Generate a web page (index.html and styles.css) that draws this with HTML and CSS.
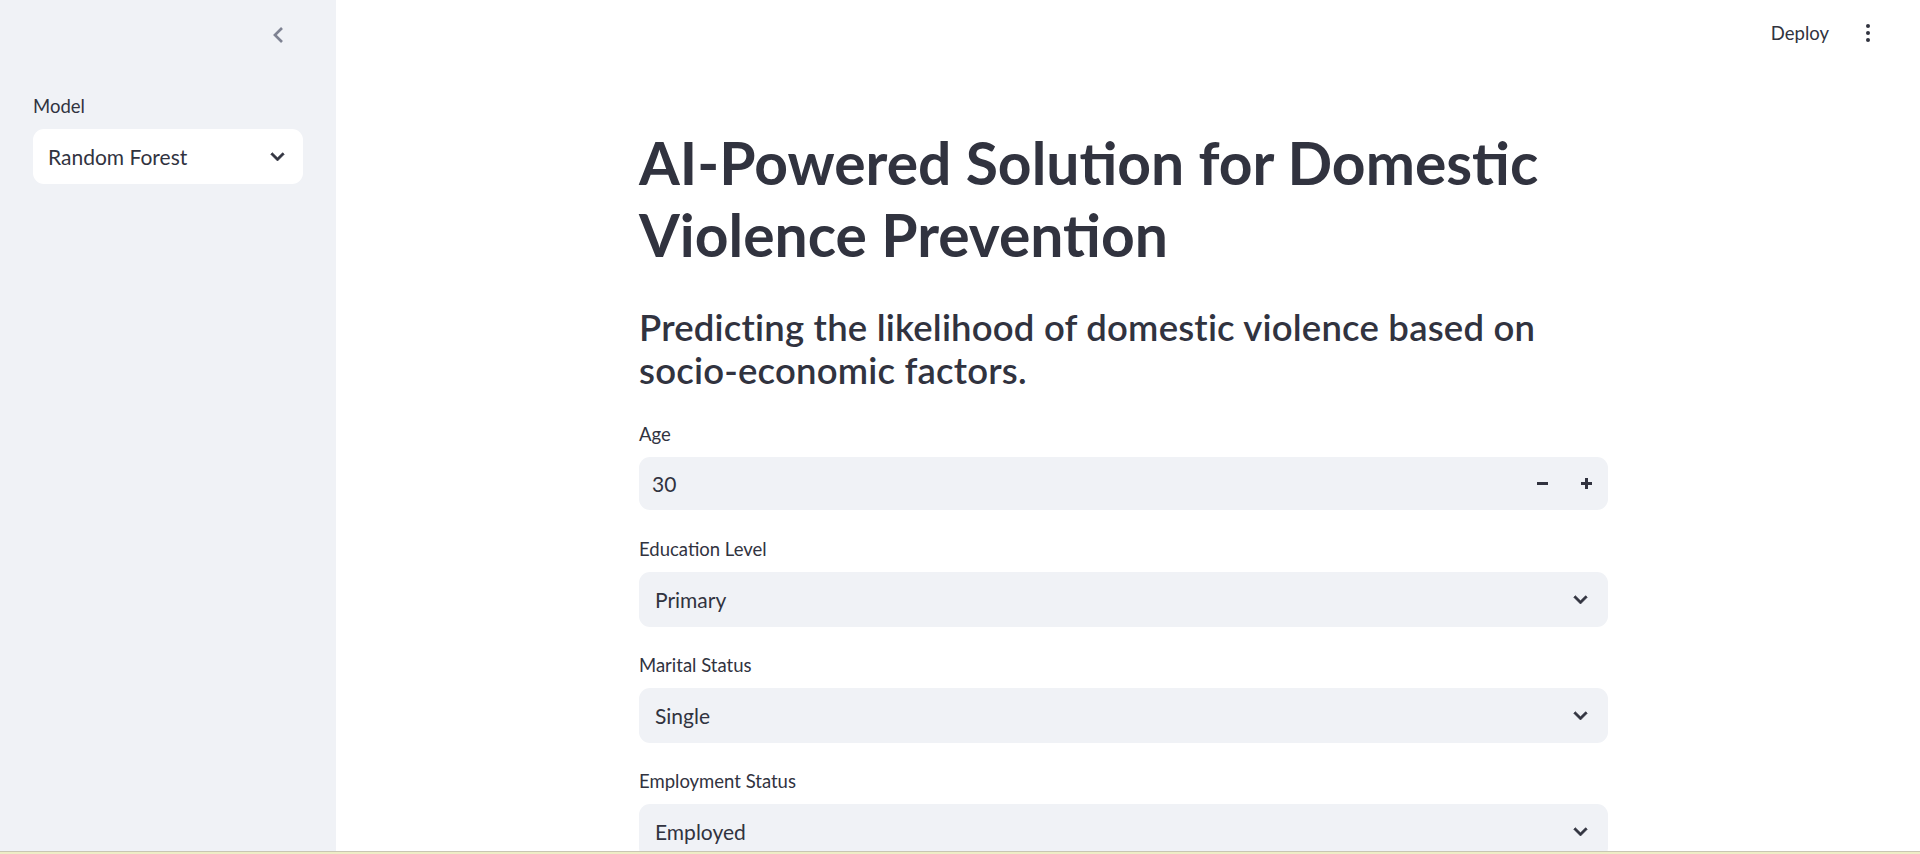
FILE: index.html
```html
<!DOCTYPE html>
<html lang="en">
<head>
<meta charset="utf-8">
<title>AI-Powered Solution for Domestic Violence Prevention</title>
<link rel="stylesheet" href="styles.css">
</head>
<body>
<aside class="sidebar">
  <div class="sidebar-top">
    <svg class="collapse" viewBox="8 6 7.41 12" width="10" height="16" aria-hidden="true"><path d="M15.41 7.41L14 6l-6 6 6 6 1.41-1.41L10.83 12z" fill="currentColor"/></svg>
  </div>
  <div class="sidebar-body">
    <div class="label">Model</div>
    <div class="select select-white">
      <span class="value">Random Forest</span>
      <svg class="chev" viewBox="0 0 24 24" aria-hidden="true"><path d="M16.59 8.59L12 13.17 7.41 8.59 6 10l6 6 6-6z" fill="currentColor"/></svg>
    </div>
  </div>
</aside>
<main class="main">
  <header class="topbar">
    <span class="deploy">Deploy</span>
    <span class="kebab"><i></i><i></i><i></i></span>
  </header>
  <section class="content">
    <h1 class="title">AI-Powered Solution for Domestic Violence Prevention</h1>
    <h3 class="subtitle">Predicting the likelihood of domestic violence based on <span class="nowrap">socio-economic</span> factors.</h3>
    <div class="form">
      <div class="field field-age">
        <div class="label">Age</div>
        <div class="number">
          <span class="value num-value">30</span>
          <div class="steps">
            <span class="step"><svg viewBox="0 0 11 11" width="11" height="11"><rect x="0" y="4" width="11" height="3" fill="currentColor"/></svg></span>
            <span class="step"><svg viewBox="0 0 11 11" width="11" height="11"><rect x="0" y="4" width="11" height="3" fill="currentColor"/><rect x="4" y="0" width="3" height="11" fill="currentColor"/></svg></span>
          </div>
        </div>
      </div>
      <div class="field">
        <div class="label">Education Level</div>
        <div class="select">
          <span class="value">Primary</span>
          <svg class="chev" viewBox="0 0 24 24" aria-hidden="true"><path d="M16.59 8.59L12 13.17 7.41 8.59 6 10l6 6 6-6z" fill="currentColor"/></svg>
        </div>
      </div>
      <div class="field">
        <div class="label">Marital Status</div>
        <div class="select">
          <span class="value">Single</span>
          <svg class="chev" viewBox="0 0 24 24" aria-hidden="true"><path d="M16.59 8.59L12 13.17 7.41 8.59 6 10l6 6 6-6z" fill="currentColor"/></svg>
        </div>
      </div>
      <div class="field">
        <div class="label">Employment Status</div>
        <div class="select">
          <span class="value">Employed</span>
          <svg class="chev" viewBox="0 0 24 24" aria-hidden="true"><path d="M16.59 8.59L12 13.17 7.41 8.59 6 10l6 6 6-6z" fill="currentColor"/></svg>
        </div>
      </div>
    </div>
  </section>
</main>
<div class="bottom-line"></div>
</body>
</html>
```
FILE: styles.css
```css
html, body {
  margin: 0;
  padding: 0;
  height: 100%;
}
body {
  display: flex;
  height: 854px;
  overflow: hidden;
  font-family: "Lato", "Noto Sans", sans-serif;
  color: #31333f;
  background: #ffffff;
}
.sidebar {
  width: 336px;
  flex: 0 0 336px;
  background: #f0f2f6;
  display: flex;
  flex-direction: column;
}
.sidebar-top {
  height: 70px;
  display: flex;
  justify-content: flex-end;
  align-items: center;
  padding-right: 53px;
}
.collapse {
  color: #7e8292;
}
.sidebar-body {
  padding: 23px 33px 0 33px;
}
.label {
  font-size: 18.5px;
  line-height: 26px;
  height: 26px;
  margin-bottom: 10px;
  color: #31333f;
}
.select {
  height: 55px;
  box-sizing: border-box;
  border-radius: 11px;
  background: #f0f2f6;
  display: flex;
  align-items: center;
  justify-content: space-between;
  padding: 0 16px 0 16px;
}
.select-white {
  background: #ffffff;
  padding-left: 15px;
  padding-right: 14px;
}
.value {
  font-size: 21px;
  color: #31333f;
  padding-bottom: 1px;
}
.chev {
  width: 27px;
  height: 27px;
  color: #31333f;
  margin-right: -2px;
  stroke: #31333f;
  stroke-width: 0.6;
}
.main {
  flex: 1;
  display: flex;
  flex-direction: column;
  min-width: 0;
}
.topbar {
  height: 66px;
  flex: 0 0 66px;
  display: flex;
  justify-content: flex-end;
  align-items: center;
  padding-right: 50px;
  gap: 37px;
}
.deploy {
  font-size: 18.5px;
  color: #31333f;
}
.kebab {
  display: flex;
  flex-direction: column;
  gap: 3px;
}
.kebab i {
  display: block;
  width: 4px;
  height: 4px;
  border-radius: 50%;
  background: #31333f;
}
.content {
  width: 969px;
  margin: 0 auto;
  padding-right: 9px;
  box-sizing: content-box;
}
.title {
  margin: 61px 0 0 0;
  font-size: 58.8px;
  line-height: 72px;
  font-weight: 700;
}
.subtitle {
  margin: 35px 0 0 0;
  font-size: 36.5px;
  line-height: 43px;
  letter-spacing: 0.2px;
  font-weight: 600;
}
.nowrap {
  white-space: nowrap;
}
.form {
  margin-top: 29px;
  display: flex;
  flex-direction: column;
  gap: 25px;
}
.field-age {
  margin-bottom: 1px;
}
.number {
  height: 53px;
  border-radius: 11px;
  background: #f0f2f6;
  display: flex;
  align-items: center;
  justify-content: space-between;
  padding-left: 13px;
}
.steps {
  display: flex;
  height: 100%;
}
.step {
  width: 44px;
  height: 100%;
  display: flex;
  align-items: center;
  justify-content: center;
  color: #31333f;
}
.bottom-line {
  position: fixed;
  left: 0;
  right: 0;
  bottom: 0;
  height: 2px;
  border-top: 1px solid #c9c6b4;
  background: #eeedc6;
}
```
